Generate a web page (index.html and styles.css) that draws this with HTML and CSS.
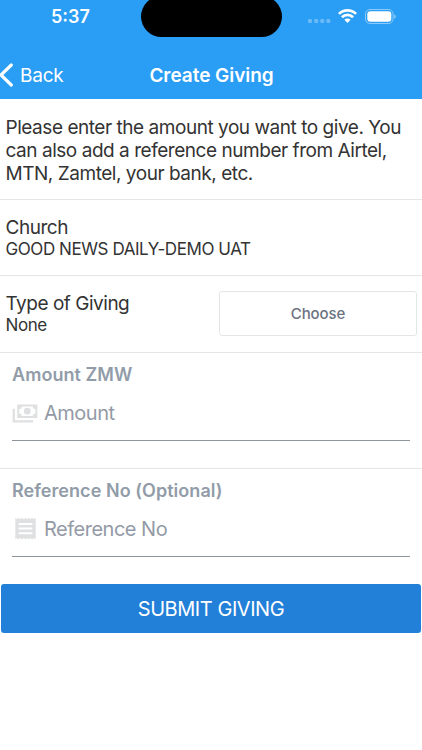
FILE: index.html
```html
<!DOCTYPE html>
<html lang="en">
<head>
    <meta charset="utf-8">
    <meta name="viewport" content="width=device-width, initial-scale=1">
    <title>Create Giving</title>
    <link rel="stylesheet" href="styles.css">
</head>
<body>
    <header class="header">
        <div class="status-bar">
            <span class="time">5:37</span>
            <div class="island"></div>
            <div class="status-icons">
                <svg class="dots" width="23" height="4" viewBox="0 0 23 4" fill="#fff">
                    <rect x="0" y="0" width="4" height="4" rx="1.3"/>
                    <rect x="6.2" y="0" width="4" height="4" rx="1.3"/>
                    <rect x="12.3" y="0" width="4" height="4" rx="1.3"/>
                    <rect x="18.4" y="0" width="4" height="4" rx="1.3"/>
                </svg>
                <svg class="wifi" width="19" height="14" viewBox="0 0 19 14" fill="none" stroke="#fff" stroke-width="2.7">
                    <path d="M0.9 4.9 A12.3 12.3 0 0 1 18.1 4.9"/>
                    <path d="M3.9 8.2 A8 8 0 0 1 15.1 8.2"/>
                    <path d="M9.5 13.9 L6.4 10.8 A4.3 4.3 0 0 1 12.6 10.8 Z" fill="#fff" stroke="none"/>
                </svg>
                <svg class="battery" width="31" height="15" viewBox="0 0 31 15">
                    <rect x="0.5" y="0.5" width="27.5" height="14" rx="4.4" fill="none" stroke="#fff" stroke-opacity="0.45"/>
                    <rect x="2.3" y="2.3" width="24" height="10.4" rx="3" fill="#fff"/>
                    <path d="M29.2 5.2 Q30.8 6 30.8 7.5 Q30.8 9 29.2 9.8 Z" fill="#fff" fill-opacity="0.5"/>
                </svg>
            </div>
        </div>
        <nav class="nav-bar">
            <a class="back">
                <svg width="14" height="25" viewBox="0 0 14 25" fill="none" stroke="#fff" stroke-width="3.2" stroke-linecap="round" stroke-linejoin="round">
                    <path d="M11.3 2 L0.9 12 L11.3 22"/>
                </svg>
                <span class="back-text">Back</span>
            </a>
            <h1 class="title">Create Giving</h1>
        </nav>
    </header>

    <main>
        <section class="row intro">
            <p>Please enter the amount you want to give. You can also add a reference number from Airtel, MTN, Zamtel, your bank, etc.</p>
        </section>

        <section class="row church">
            <div class="label">Church</div>
            <div class="value">GOOD NEWS DAILY-DEMO UAT</div>
        </section>

        <section class="row type">
            <div>
                <div class="label">Type of Giving</div>
                <div class="value">None</div>
            </div>
            <button class="choose">Choose</button>
        </section>

        <section class="row field">
            <label class="field-label" for="amount">Amount ZMW</label>
            <div class="input-box">
                <svg width="26" height="20" viewBox="0 0 26 20" fill="#dfe0e1">
                    <path d="M0.6 5.8 H2.9 V17.2 H21 V19.5 H0.6 Z"/>
                    <path fill-rule="evenodd" d="M5.2 1.4 H25.4 V15 H5.2 Z M9.8 3.4 A2.6 2.6 0 0 1 7.2 6 V10.4 A2.6 2.6 0 0 1 9.8 13 H20.8 A2.6 2.6 0 0 1 23.4 10.4 V6 A2.6 2.6 0 0 1 20.8 3.4 Z"/>
                    <circle cx="15.3" cy="8.2" r="3.4"/>
                </svg>
                <input id="amount" type="text" placeholder="Amount">
            </div>
        </section>

        <section class="field last">
            <label class="field-label" for="reference">Reference No (Optional)</label>
            <div class="input-box">
                <svg width="26" height="24" viewBox="0 0 26 24" fill="#dfe0e1">
                    <path fill-rule="evenodd" d="M3.3 0.8 L5 2.2 L6.7 0.8 L8.4 2.2 L10.1 0.8 L11.8 2.2 L13.5 0.8 L15.2 2.2 L16.9 0.8 L18.6 2.2 L20.3 0.8 L22 2.2 L23.7 0.8 V22.4 L22 21 L20.3 22.4 L18.6 21 L16.9 22.4 L15.2 21 L13.5 22.4 L11.8 21 L10.1 22.4 L8.4 21 L6.7 22.4 L5 21 L3.3 22.4 Z M6.6 6 V8 H20.4 V6 Z M6.6 10.6 V12.6 H20.4 V10.6 Z M6.6 15.2 V17.2 H20.4 V15.2 Z"/>
                </svg>
                <input id="reference" type="text" placeholder="Reference No">
            </div>
        </section>

        <button class="submit">SUBMIT GIVING</button>
    </main>
</body>
</html>
```
FILE: styles.css
```css
* {
    box-sizing: border-box;
}

body {
    margin: 0;
    height: 750px;
    overflow: hidden;
    background: #fff;
    color: #333;
    font-family: Inter, "Liberation Sans", sans-serif;
}

.header {
    height: 99px;
    background: #2a9df4;
    color: #fff;
}

.status-bar {
    display: grid;
    grid-template-columns: 141px 141px 140px;
    height: 51px;
}

.time {
    padding-top: 6px;
    text-align: center;
    font-size: 18px;
    font-weight: 600;
    line-height: 22px;
}

.island {
    height: 41px;
    margin-top: -4px;
    background: #000;
    border-radius: 21px;
}

.status-icons {
    display: flex;
    align-items: flex-start;
    padding-left: 26px;
}

.dots {
    margin-top: 19px;
    opacity: 0.3;
}

.wifi {
    margin: 9px 8px 0 7px;
}

.battery {
    margin-top: 8.5px;
}

.nav-bar {
    display: grid;
    grid-template-columns: 141px 141px 140px;
    align-items: center;
    height: 48px;
}

.back {
    display: flex;
    align-items: center;
    gap: 6px;
}

.back-text {
    font-size: 19px;
    letter-spacing: -0.2px;
}

.title {
    margin: 0;
    text-align: center;
    font-size: 19px;
    font-weight: 600;
    letter-spacing: -0.05px;
    white-space: nowrap;
}

.row {
    border-bottom: 1px solid #e6e6e8;
}

.intro {
    height: 101px;
    padding: 17px 6px 0 5.5px;
}

.intro p {
    margin: 0;
    font-size: 19px;
    letter-spacing: -0.46px;
    line-height: 23px;
}

.church {
    height: 76px;
    padding: 16px 6px 0 5.5px;
}

.label {
    font-size: 19px;
    letter-spacing: -0.48px;
    line-height: 23px;
}

.value {
    font-size: 17px;
    letter-spacing: -0.43px;
    line-height: 20px;
}

.type {
    display: flex;
    justify-content: space-between;
    height: 77px;
    padding: 16px 5px 0 5.5px;
}

.choose {
    width: 198px;
    height: 45px;
    margin-top: -1px;
    padding: 0;
    background: #fff;
    border: 1px solid #e4e5e7;
    border-radius: 3px;
    color: #6b7280;
    font-family: inherit;
    font-size: 15px;
    font-weight: 500;
    letter-spacing: -0.1px;
}

.field {
    height: 116px;
    padding: 11px 12px 0;
}

.last {
    height: 115px;
}

.field-label {
    display: block;
    color: #919ca8;
    font-size: 18px;
    font-weight: 600;
    letter-spacing: 0.05px;
    line-height: 22px;
}

.input-box {
    display: flex;
    align-items: center;
    height: 55px;
    border-bottom: 1px solid #8f959d;
}

.input-box input {
    width: 300px;
    margin-left: 6px;
    padding: 0;
    border: 0;
    outline: 0;
    background: none;
    font-family: inherit;
    font-size: 20px;
    letter-spacing: -0.5px;
}

.input-box input::placeholder {
    color: #939aa6;
    opacity: 1;
}

.submit {
    display: block;
    width: 420px;
    height: 49px;
    margin: 0 1px;
    padding: 1px 0 0;
    background: #2380d8;
    border: 0;
    border-radius: 3px;
    color: #fff;
    font-family: inherit;
    font-size: 20px;
    letter-spacing: -0.45px;
}
```
